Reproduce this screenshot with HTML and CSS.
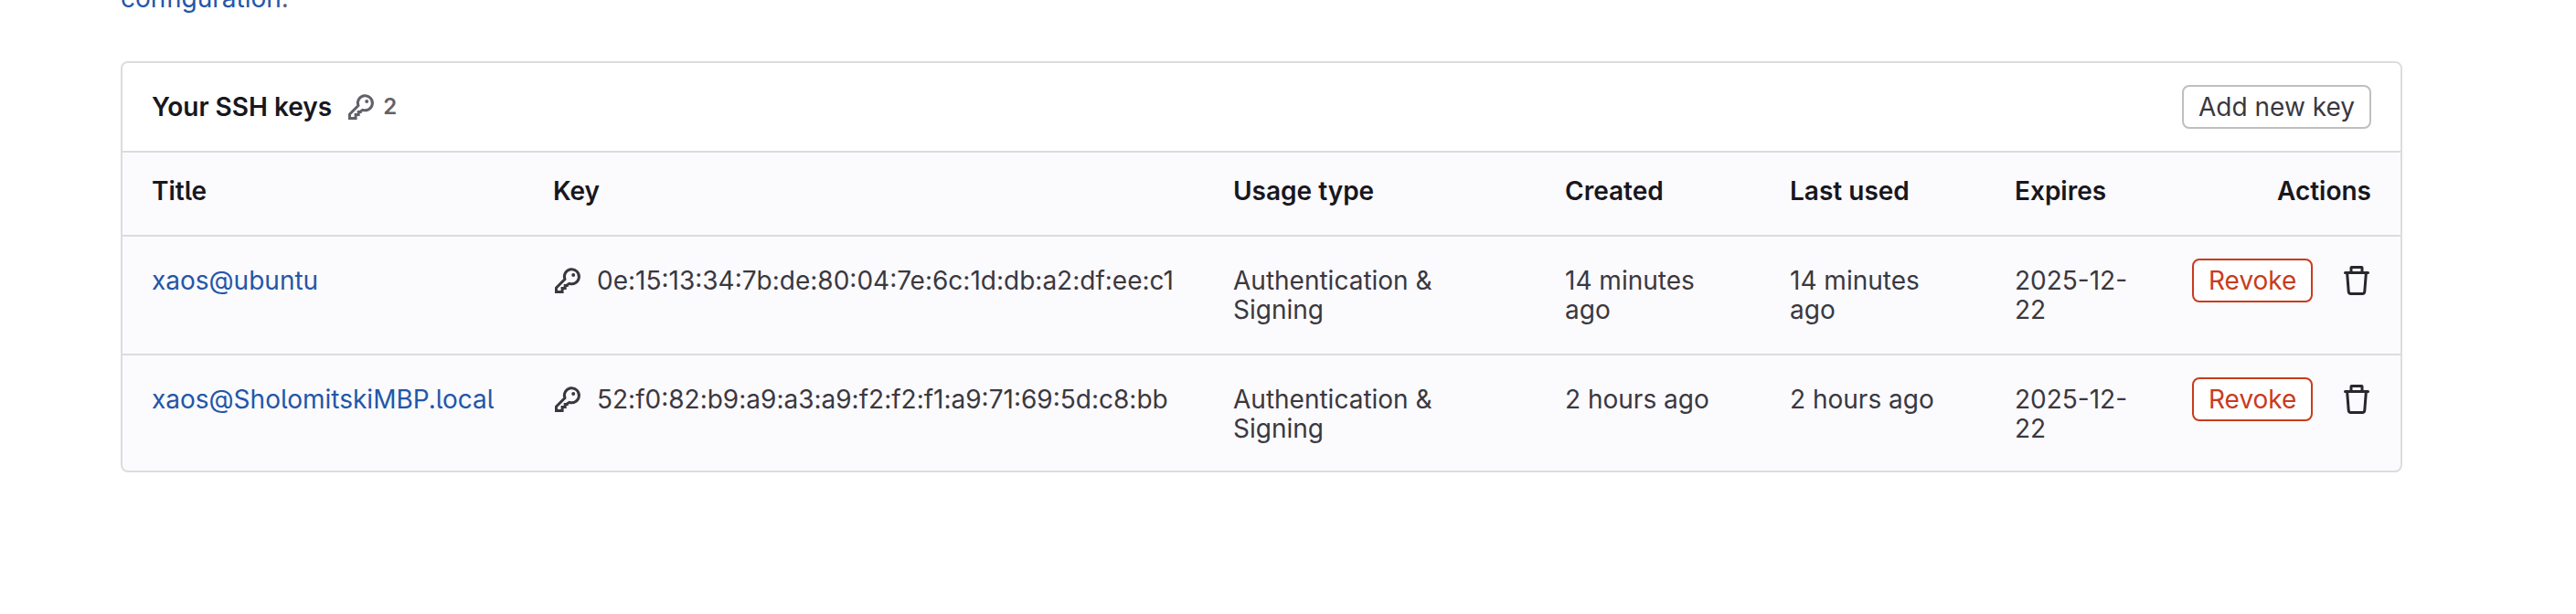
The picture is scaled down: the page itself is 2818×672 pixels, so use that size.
FILE: index.html
```html
<!DOCTYPE html>
<html lang="en">
<head>
<meta charset="utf-8">
<title>SSH keys</title>
<link rel="stylesheet" href="styles.css">
</head>
<body>
<svg class="sprite" aria-hidden="true">
  <symbol id="key" viewBox="0 0 16 16">
    <path fill="none" stroke="currentColor" stroke-width="1.5" d="M1.750 14.250V12L6.450 7.250A4 4 0 1 1 8.900 9.650L7.600 10.500V10.700H6.600V12.200H5.050V14.250Z"/>
    <circle cx="11.100" cy="5" r="1"/>
  </symbol>
  <symbol id="remove" viewBox="0 0 16 16">
    <path fill-rule="evenodd" d="M5.750 3V1.500h4.500V3h-4.500zm-1.500 0V1a1 1 0 0 1 1-1h5.500a1 1 0 0 1 1 1v2h2.500a.75.75 0 0 1 0 1.500h-.365l-.743 9.653A2 2 0 0 1 11.148 16H4.852a2 2 0 0 1-1.994-1.847L2.115 4.500H1.750a.75.75 0 0 1 0-1.500h2.500zm-.630 1.500l.734 9.538a.5.5 0 0 0 .498.462h6.296a.5.5 0 0 0 .498-.462L12.380 4.500H3.620z"/>
  </symbol>
</svg>
<main class="page">
  <p class="intro"><a class="link" href="#">configuration</a>.</p>
  <section class="card">
    <header class="card-header">
      <h2 class="card-title">Your SSH keys</h2>
      <span class="count"><svg class="icon"><use href="#key"/></svg>2</span>
      <button class="btn add">Add new key</button>
    </header>
    <div class="row head">
      <div>Title</div><div>Key</div><div>Usage type</div><div>Created</div><div>Last used</div><div>Expires</div><div class="right">Actions</div>
    </div>
    <div class="row">
      <div><a class="link" href="#">xaos@ubuntu</a></div>
      <div class="key"><svg class="icon"><use href="#key"/></svg><span class="hash">0e:15:13:34:7b:de:80:04:7e:6c:1d:db:a2:df:ee:c1</span></div>
      <div>Authentication &amp; Signing</div>
      <div class="time">14 minutes ago</div>
      <div class="time">14 minutes ago</div>
      <div class="date">2025-12-22</div>
      <div class="actions"><button class="btn danger">Revoke</button><svg class="icon trash"><use href="#remove"/></svg></div>
    </div>
    <div class="row last">
      <div><a class="link" href="#">xaos@SholomitskiMBP.local</a></div>
      <div class="key"><svg class="icon"><use href="#key"/></svg><span class="hash">52:f0:82:b9:a9:a3:a9:f2:f2:f1:a9:71:69:5d:c8:bb</span></div>
      <div>Authentication &amp; Signing</div>
      <div class="time">2 hours ago</div>
      <div class="time">2 hours ago</div>
      <div class="date">2025-12-22</div>
      <div class="actions"><button class="btn danger">Revoke</button><svg class="icon trash"><use href="#remove"/></svg></div>
    </div>
  </section>
</main>
</body>
</html>
```
FILE: styles.css
```css
* { box-sizing: border-box; }
body {
  margin: 0;
  background: #fff;
  color: #3a383f;
  font: 28px/32px Inter, "Liberation Sans", sans-serif;
  font-feature-settings: "cv05";
  overflow: hidden;
}
.sprite { display: none; }
.page { padding: 0 190px 0 132px; }
.intro { margin: -18px 0 53px; color: #626168; }
.link { color: #2356a8; text-decoration: none; }
.card {
  border: 2px solid #dcdcde;
  border-radius: 8px;
  background: #fbfafd;
  overflow: hidden;
}
.card-header {
  display: flex;
  align-items: center;
  height: 98px;
  padding: 0 32px;
  border-bottom: 2px solid #dcdcde;
  background: #fff;
}
.card-title { margin: 0; font-size: 28px; font-weight: 620; color: #18171d; }
.count {
  display: flex;
  align-items: center;
  gap: 8px;
  margin-left: 16px;
  color: #626168;
  font-size: 24px;
  font-weight: 620;
}
.icon { display: block; flex: none; width: 32px; height: 32px; fill: currentColor; }
.btn {
  height: 48px;
  padding: 0 16px;
  border: 2px solid #bfbfc3;
  border-radius: 8px;
  background: #fff;
  color: #3a383f;
  font: inherit;
  font-feature-settings: inherit;
  white-space: nowrap;
}
.add { width: 207px; margin-left: auto; }
.danger { width: 132px; border-color: #c93b1c; color: #c93b1c; }
.row {
  display: grid;
  grid-template-columns: 439px 744px 363px 246px 246px 150px 1fr;
  padding: 32px;
  border-bottom: 2px solid #dcdcde;
}
.row > div { padding-right: 40px; }
.head { padding: 26px 32px 32px; font-weight: 620; color: #18171d; }
.row > .right { padding: 0; text-align: right; }
.last { padding-bottom: 30px; border-bottom: 0; }
.row > .key { display: flex; gap: 16px; padding-right: 0; }
.row > .time { padding-right: 80px; }
.row > .date { padding-right: 16px; }
.row > .actions {
  display: flex;
  justify-content: flex-end;
  gap: 32px;
  height: 48px;
  margin-top: -8px;
  padding: 0;
}
.trash { margin-top: 8px; color: #28272d; }
```
